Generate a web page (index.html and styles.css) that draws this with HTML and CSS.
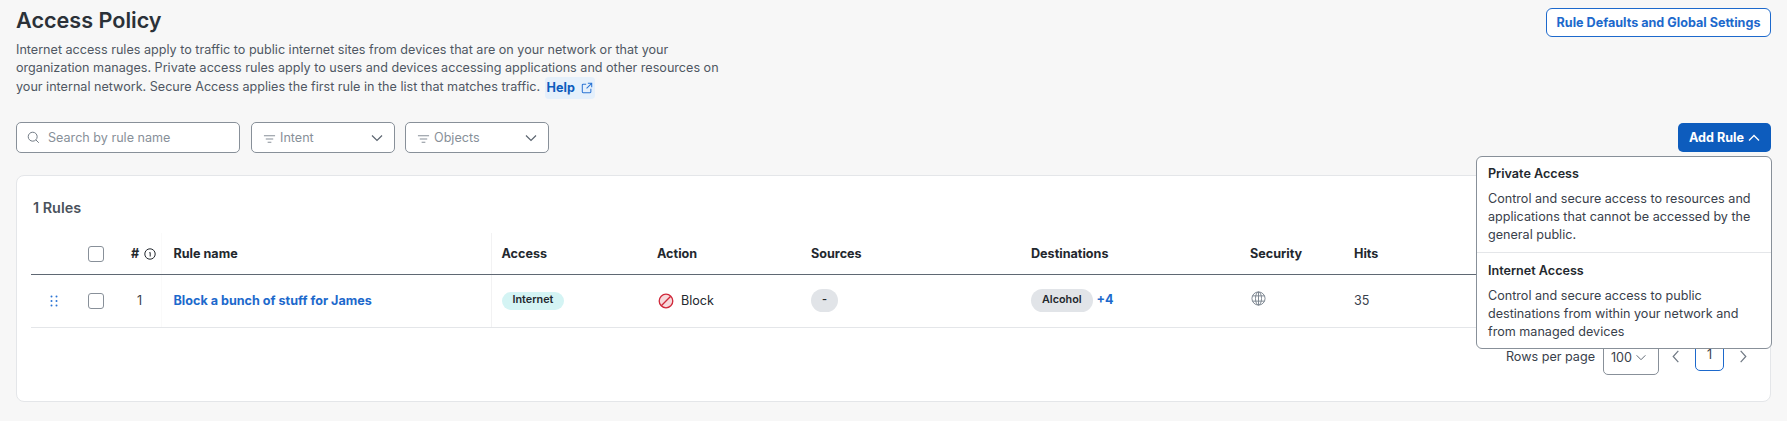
FILE: index.html
```html
<!DOCTYPE html>
<html lang="en">
<head>
<meta charset="utf-8">
<title>Access Policy</title>
<link rel="stylesheet" href="styles.css">
</head>
<body>
<main class="page">
  <header class="head">
    <div class="intro">
      <h1 class="title">Access Policy</h1>
      <p class="lede">Internet access rules apply to traffic to public internet sites from devices that are on your network or that your organization manages. Private access rules apply to users and devices accessing applications and other resources on your internal network. Secure Access applies the first rule in the list that matches traffic. <a class="help" href="#">Help <svg class="help-icon" viewBox="0 0 14 14"><path d="M6 2.5H2.5a1 1 0 0 0-1 1v8a1 1 0 0 0 1 1h8a1 1 0 0 0 1-1V8M8 1.5h4.500V6M12.500 1.500 6.500 7.500"/></svg></a></p>
    </div>
    <button class="btn-outline">Rule Defaults and Global Settings</button>
  </header>

  <div class="toolbar">
    <div class="filters">
      <label class="field search">
        <svg class="ico-search" viewBox="0 0 16 16"><circle cx="7" cy="7" r="5.500"/><path d="m11 11 3.500 3.500"/></svg>
        <span>Search by rule name</span>
      </label>
      <div class="field select">
        <svg class="ico-filter" viewBox="0 0 14 10"><path d="M1 1.500h12M3 5h8M5 8.500h4"/></svg>
        <span class="grow">Intent</span>
        <svg class="ico-chev" viewBox="0 0 12 8"><path d="m1 1.500 5 5 5-5"/></svg>
      </div>
      <div class="field select">
        <svg class="ico-filter" viewBox="0 0 14 10"><path d="M1 1.500h12M3 5h8M5 8.500h4"/></svg>
        <span class="grow">Objects</span>
        <svg class="ico-chev" viewBox="0 0 12 8"><path d="m1 1.500 5 5 5-5"/></svg>
      </div>
    </div>
    <div class="add-wrap">
      <button class="btn-primary">Add Rule <svg class="ico-up" viewBox="0 0 12 8"><path d="m1 6.500 5-5 5 5"/></svg></button>
      <div class="menu">
        <div class="menu-item">
          <div class="menu-title">Private Access</div>
          <div class="menu-desc">Control and secure access to resources and applications that cannot be accessed by the general public.</div>
        </div>
        <div class="menu-item">
          <div class="menu-title">Internet Access</div>
          <div class="menu-desc">Control and secure access to public destinations from within your network and from managed devices</div>
        </div>
      </div>
    </div>
  </div>

  <section class="card">
    <div class="count">1 Rules</div>
    <table class="rules">
      <colgroup>
        <col class="c-drag"><col class="c-check"><col class="c-num"><col class="c-name"><col class="c-access"><col class="c-action"><col class="c-sources"><col class="c-dest"><col class="c-sec"><col class="c-hits">
      </colgroup>
      <thead>
        <tr>
          <th></th>
          <th><span class="check"></span></th>
          <th class="num-h"><span class="num-wrap"># <svg class="ico-info" viewBox="0 0 12 12"><circle cx="6" cy="6" r="5.200"/><path d="M5.300 4.800 6.200 4.500V8.500"/></svg></span></th>
          <th class="line-faint">Rule name</th>
          <th class="line-l">Access</th>
          <th>Action</th>
          <th>Sources</th>
          <th>Destinations</th>
          <th>Security</th>
          <th>Hits</th>
        </tr>
      </thead>
      <tbody>
        <tr>
          <td class="drag"><svg class="ico-drag" viewBox="0 0 8 12"><circle cx="1.500" cy="1.500" r="1"/><circle cx="6.500" cy="1.500" r="1"/><circle cx="1.500" cy="6" r="1"/><circle cx="6.500" cy="6" r="1"/><circle cx="1.500" cy="10.500" r="1"/><circle cx="6.500" cy="10.500" r="1"/></svg></td>
          <td><span class="check"></span></td>
          <td class="num-d">1</td>
          <td class="line-faint"><a class="rule-link" href="#">Block a bunch of stuff for James</a></td>
          <td class="line-l"><span class="pill-net">Internet</span></td>
          <td><span class="action"><svg class="ico-block" viewBox="0 0 16 16"><circle cx="8" cy="8" r="6.800"/><path d="M3.300 12.700 12.700 3.300"/></svg>Block</span></td>
          <td><span class="pill-grey pill-dash">-</span></td>
          <td><span class="pill-grey">Alcohol</span><a class="more" href="#">+4</a></td>
          <td class="sec"><svg class="ico-globe" viewBox="0 0 16 16"><circle cx="8" cy="8" r="7"/><ellipse cx="8" cy="8" rx="3.200" ry="7"/><path d="M8 1v14M1.600 5.200h12.800M1.600 10.800h12.800"/></svg></td>
          <td>35</td>
        </tr>
      </tbody>
    </table>
    <div class="pager">
      <span class="rows-label">Rows per page</span>
      <div class="rows-select">100<svg class="ico-chev-sm" viewBox="0 0 12 8"><path d="m1 1.500 5 5 5-5"/></svg></div>
      <svg class="ico-page" viewBox="0 0 8 14"><path d="M6.500 1 1 7l5.500 6"/></svg>
      <div class="page-box">1</div>
      <svg class="ico-page" viewBox="0 0 8 14"><path d="m1.500 1 5.500 6-5.500 6"/></svg>
    </div>
  </section>
</main>
</body>
</html>
```

FILE: styles.css
```css
* { box-sizing: border-box; }
html, body { margin: 0; height: 100%; }
body {
  background: #f7f7f7;
  color: #23282e;
  font-family: Inter, "Liberation Sans", sans-serif;
  font-size: 12.6px;
  line-height: 18px;
  overflow: hidden;
}
svg { display: block; fill: none; }
button { font: inherit; cursor: pointer; }

.page { padding: 8px 16px 0; }

.head { display: flex; justify-content: space-between; align-items: flex-start; }
.intro { width: 716px; }
.title { margin: 0; font-size: 21.6px; line-height: 24px; font-weight: 600; color: #2b3138; }
.lede { margin: 9px 0 0; color: #4f5763; }
.help {
  display: inline-flex;
  align-items: center;
  gap: 6px;
  height: 22px;
  padding: 0 2px;
  margin-left: 1px;
  vertical-align: middle;
  border-radius: 4px;
  background: #e5f0fb;
  color: #0d5cbd;
  font-weight: 700;
  text-decoration: none;
}
.help-icon { width: 12px; height: 12px; stroke: #2b74d4; stroke-width: 1.200; }

.btn-outline {
  width: 225px;
  height: 29px;
  padding: 0;
  background: #fff;
  border: 1px solid #1d69cc;
  border-radius: 6px;
  color: #1d69cc;
  font-weight: 700;
  font-size: 12.6px;
}

.toolbar { display: flex; justify-content: space-between; align-items: flex-start; margin-top: 23px; }
.filters { display: flex; gap: 10px; }
.field {
  display: flex;
  align-items: center;
  height: 31px;
  background: #fff;
  border: 1px solid #889099;
  border-radius: 5px;
  color: #889099;
}
.search { width: 224px; margin-right: 1px; padding-left: 10px; gap: 8px; }
.select { width: 144px; padding: 0 11px; gap: 4px; }
.grow { flex: 1; }
.ico-search { width: 13px; height: 13px; stroke: #6f7883; stroke-width: 1.200; }
.ico-filter { width: 13px; height: 10px; stroke: #889099; stroke-width: 1.200; margin-top: 3px; }
.ico-chev { width: 12px; height: 8px; stroke: #5c6570; stroke-width: 1.200; }

.add-wrap { position: relative; margin-top: 1px; }
.btn-primary {
  display: flex;
  align-items: center;
  gap: 4px;
  width: 93px;
  height: 29px;
  padding: 0 0 0 11px;
  background: #0d5cbd;
  border: 0;
  border-radius: 5px;
  color: #fff;
  font-weight: 700;
  font-size: 12.6px;
}
.ico-up { width: 12px; height: 8px; stroke: #fff; stroke-width: 1.300; }

.menu {
  position: absolute;
  z-index: 5;
  top: 33px;
  right: -1px;
  width: 296px;
  background: #fff;
  border: 1px solid #889099;
  border-radius: 6px;
}
.menu-item { padding: 8px 11px 8px; }
.menu-item + .menu-item { border-top: 1px solid #e4e6e9; padding: 9px 11px 7px; }
.menu-title { font-weight: 600; color: #23282e; }
.menu-desc { margin-top: 7px; color: #39414b; }

.card {
  height: 227px;
  margin-top: 22px;
  padding: 0 14px;
  background: #fff;
  border: 1px solid #e4e6e9;
  border-radius: 8px;
}
.count { margin-top: 23px; padding-left: 2px; font-size: 14.4px; font-weight: 600; color: #4a525c; }

.rules { width: 1724px; margin-top: 16px; border-collapse: collapse; table-layout: fixed; }
.c-drag { width: 47px; }
.c-check { width: 37px; }
.c-num { width: 46px; }
.c-name { width: 330px; }
.c-access { width: 155px; }
.c-action { width: 154px; }
.c-sources { width: 220px; }
.c-dest { width: 219px; }
.c-sec { width: 104px; }
.c-hits { width: 412px; }

.rules th {
  height: 41px;
  padding: 1px 0 0 11px;
  border-bottom: 1px solid #5f6873;
  text-align: left;
  font-weight: 700;
  color: #23282e;
}
.rules td {
  height: 53px;
  padding: 0 0 0 11px;
  border-bottom: 1px solid #e4e6e9;
  color: #39414b;
}
.rules .line-l { border-left: 1px solid #f2f2f3; padding-left: 10px; }
.rules .line-faint { border-left: 1px solid #fafafa; padding-left: 12px; }
.rules th:nth-child(2), .rules td:nth-child(2) { padding-left: 10px; }
.rules th:nth-child(3) { padding-left: 16px; }
.rules td:nth-child(3) { padding-left: 22px; }

.check {
  display: block;
  width: 16px;
  height: 16px;
  background: #fff;
  border: 1px solid #889099;
  border-radius: 3px;
}
.num-wrap { display: flex; align-items: center; gap: 5px; }
.ico-info { width: 12px; height: 12px; stroke: #23282e; stroke-width: 1; }
.ico-drag { width: 8px; height: 12px; margin-left: 8px; fill: #2b74d4; }

.rule-link { color: #1d69cc; font-weight: 700; text-decoration: none; }
.pill-net {
  display: inline-block;
  height: 18px;
  padding: 0 11px;
  background: #d4f4f4;
  border-radius: 9px;
  color: #23282e;
  font-size: 10.8px;
  font-weight: 600;
  line-height: 16px;
  vertical-align: middle;
}
.action { display: flex; align-items: center; gap: 7px; color: #23282e; }
.ico-block { width: 16px; height: 16px; stroke: #d0283a; stroke-width: 1.300; fill: #f7d9dc; margin-left: 1px; }
.pill-grey {
  display: inline-block;
  height: 23px;
  padding: 0 11px;
  background: #e1e4e8;
  border-radius: 12px;
  color: #23282e;
  font-size: 10.8px;
  font-weight: 600;
  line-height: 21px;
  vertical-align: middle;
}
.more { margin-left: 4px; color: #1d69cc; font-weight: 700; text-decoration: none; }
.ico-globe { width: 15px; height: 15px; stroke: #7a838e; stroke-width: 1; margin: -4px 0 0 1px; }

.pager { display: flex; align-items: flex-start; justify-content: flex-end; margin-top: 7px; margin-right: 1px; }
.rows-label { margin-top: 13px; color: #39414b; }
.rows-select {
  display: flex;
  align-items: center;
  gap: 3px;
  width: 56px;
  height: 40px;
  margin-left: 8px;
  padding: 6px 0 0 7px;
  border: 1px solid #889099;
  border-radius: 5px;
  color: #39414b;
}
.ico-chev-sm { width: 12px; height: 7px; stroke: #5c6570; stroke-width: 1.100; }
.ico-page { width: 8px; height: 13px; margin: 15px 0 0 0; stroke: #6f7883; stroke-width: 1.300; }
.rows-select + .ico-page { margin-left: 13px; margin-right: 15px; }
.page-box + .ico-page { margin-left: 15px; margin-right: 8px; }
.page-box {
  width: 29px;
  height: 36px;
  padding-top: 10px;
  border: 1px solid #1d69cc;
  border-radius: 5px;
  text-align: center;
  color: #39414b;
}
```
